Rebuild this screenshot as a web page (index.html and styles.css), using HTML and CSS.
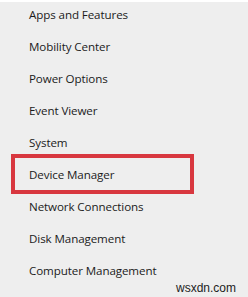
FILE: index.html
```
<!DOCTYPE html>
<html lang="en">
<head>
  <meta charset="UTF-8" />
  <title>Quick Link Menu</title>
  <link rel="stylesheet" href="styles.css">
</head>
<body>

<div class="menu">
  <ul class="menu-list">
    <li>Apps and Features</li>
    <li>Mobility Center</li>
    <li>Power Options</li>
    <li>Event Viewer</li>
    <li>System</li>
    <li class="marked">Device Manager</li>
    <li>Network Connections</li>
    <li>Disk Management</li>
    <li>Computer Management</li>
  </ul>
  <span class="watermark">wsxdn.com</span>
</div>

</body>
</html>
```

FILE: styles.css
```
body {
  margin: 0;
  background: #fff;
}
.menu {
  position: relative;
  margin-top: 2px;
  height: 295px;
  background: #eeeeee;
  font-family: 'Open Sans', sans-serif;
  color: #1b1b1b;
  overflow: hidden;
}
.menu-list {
  list-style: none;
  margin: 0;
  padding: 0;
}
.menu-list li {
  position: relative;
  height: 32px;
  line-height: 26px;
  padding-left: 29px;
  font-size: 11.6px;
  letter-spacing: -0.1px;
}
.menu-list li.marked::before {
  content: '';
  position: absolute;
  top: -8px;
  left: 11px;
  width: 175px;
  height: 32px;
  border: 4px solid #d8373f;
}
.watermark {
  position: absolute;
  right: 12px;
  bottom: 2px;
  font-family: 'Liberation Sans', sans-serif;
  font-size: 12px;
  color: #222;
}
```
